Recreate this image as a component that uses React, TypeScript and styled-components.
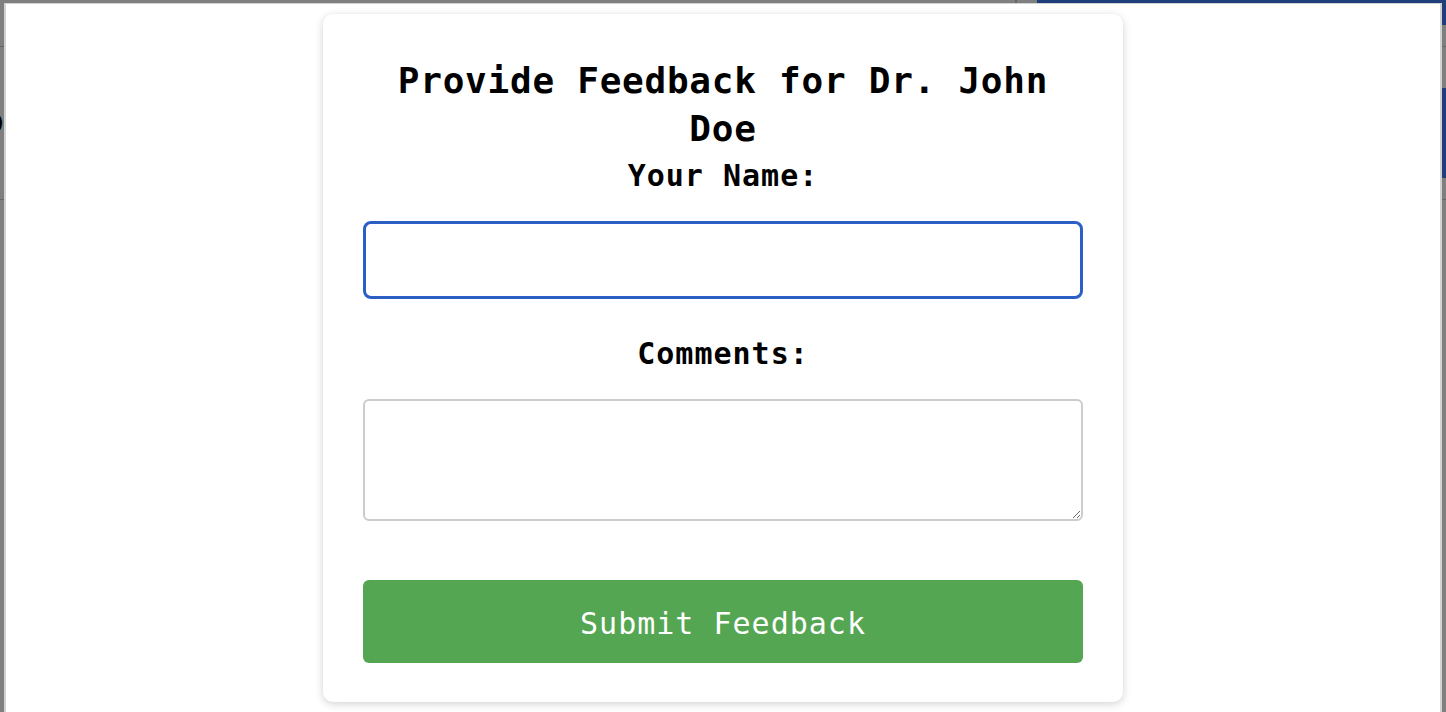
import React from "react";
import styled, { createGlobalStyle } from "styled-components";

const GlobalStyle = createGlobalStyle`
  * { box-sizing: border-box; }
  html, body { margin: 0; padding: 0; height: 100%; overflow: hidden; }
  body { font-family: "DejaVu Sans Mono", "Liberation Mono", monospace; background: #ffffff; }
`;

/* ---------- page behind the modal ---------- */
const Page = styled.div`
  width: 1446px;
  height: 712px;
  display: grid;
  grid-template-rows: 47px 153px 1fr;
  background: #ffffff;
`;

const Header = styled.header`
  display: grid;
  grid-template-columns: 1015px 2px 20px 1fr;
  border-bottom: 1px solid #cccccc;
`;

const HeaderDivider = styled.div`
  background: #cccccc;
  height: 8px;
`;

const NavBlock = styled.div`
  background: #3d7ef5;
  height: 25px;
`;

const Hero = styled.section`
  display: grid;
  grid-template-columns: 1fr 410px;
  border-bottom: 1px solid #cccccc;
`;

const HeroTitle = styled.h1`
  margin: 62px 0 0 -22px;
  font-family: "DejaVu Sans", sans-serif;
  font-size: 30px;
  line-height: 30px;
  color: #000;
`;

const HeroPanel = styled.div`
  margin-top: 41px;
  height: 90px;
  background: #3d7ef5;
`;

/* ---------- modal ---------- */
const Overlay = styled.div`
  position: fixed;
  inset: 0;
  background: rgba(0, 0, 0, 0.5);
  padding: 3px 4px 0 4px;
`;

const ModalWindow = styled.div`
  height: 760px;
  background: #ffffff;
  border-style: solid;
  border-color: #d2d2d2;
  border-width: 1px 2px 0 2px;
  display: flex;
  justify-content: center;
  padding-top: 10px;
`;

const Card = styled.div`
  width: 800px;
  height: 688px;
  background: #ffffff;
  border-radius: 10px;
  box-shadow: 0 2px 8px rgba(0, 0, 0, 0.18);
  padding: 43px 40px 0;
  display: flex;
  flex-direction: column;
`;

const Title = styled.h2`
  margin: 0;
  text-align: center;
  font-size: 36px;
  line-height: 48px;
  font-weight: 700;
  letter-spacing: 0.75px;
  color: #000;
`;

const Field = styled.div<{ $gap: number }>`
  display: flex;
  flex-direction: column;
  margin-top: ${(p) => p.$gap}px;
`;

const Label = styled.label`
  text-align: center;
  font-size: 30px;
  line-height: 40px;
  font-weight: 700;
  letter-spacing: 1px;
  color: #000;
  margin-bottom: 25px;
`;

const TextInput = styled.input`
  height: 78px;
  width: 100%;
  border: 3px solid #2b5fc6;
  border-radius: 8px;
  outline: none;
  padding: 0 16px;
  font-family: inherit;
  font-size: 24px;
  background: #fff;
`;

const TextArea = styled.textarea`
  height: 122px;
  width: 100%;
  border: 2px solid #cccccc;
  border-radius: 6px;
  padding: 12px 16px;
  font-family: inherit;
  font-size: 24px;
  resize: vertical;
  display: block;
  background: #fff;
`;

const SubmitButton = styled.button`
  margin-top: 59px;
  height: 83px;
  width: 100%;
  border: none;
  border-radius: 6px;
  background: #54a652;
  color: #ffffff;
  font-family: inherit;
  font-size: 30px;
  letter-spacing: 1px;
  padding: 3px 0 0;
  cursor: pointer;
`;

export default function App() {
  return (
    <>
      <GlobalStyle />
      <Page>
        <Header>
          <div />
          <HeaderDivider />
          <div />
          <NavBlock />
        </Header>
        <Hero>
          <HeroTitle>O</HeroTitle>
          <HeroPanel />
        </Hero>
        <div />
      </Page>
      <Overlay>
        <ModalWindow>
          <Card>
            <Title>Provide Feedback for Dr. John Doe</Title>
            <Field $gap={3}>
              <Label htmlFor="name">Your Name:</Label>
              <TextInput id="name" type="text" />
            </Field>
            <Field $gap={35}>
              <Label htmlFor="comments">Comments:</Label>
              <TextArea id="comments" />
            </Field>
            <SubmitButton type="button">Submit Feedback</SubmitButton>
          </Card>
        </ModalWindow>
      </Overlay>
    </>
  );
}
